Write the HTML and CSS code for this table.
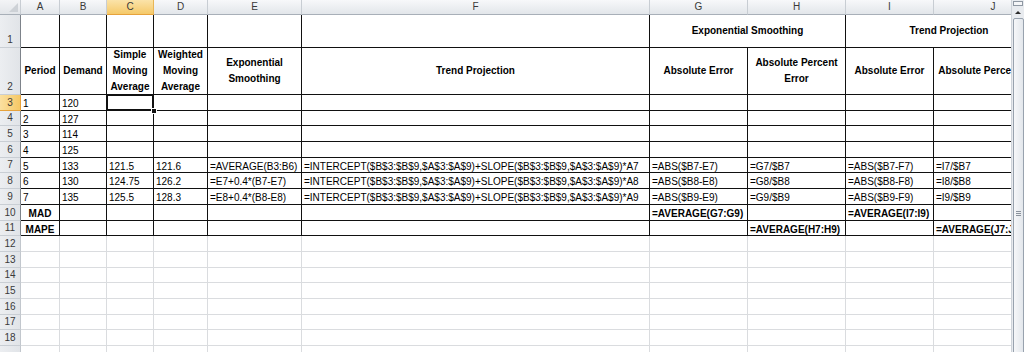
FILE: index.html
```html
<!DOCTYPE html>
<html>
<head>
<meta charset="utf-8">
<title>Forecast sheet</title>
<link rel="stylesheet" href="styles.css">
</head>
<body>
<div class="app">
  <div class="sheet">
    <div class="grid">
      <!-- column headers -->
      <div class="ch corner"><span class="tri"></span></div>
      <div class="ch">A</div><div class="ch">B</div><div class="ch sel">C</div><div class="ch">D</div><div class="ch">E</div><div class="ch">F</div><div class="ch">G</div><div class="ch">H</div><div class="ch">I</div><div class="ch">J</div>

      <!-- row 1 -->
      <div class="rh">1</div>
      <div class="c"></div><div class="c"></div><div class="c"></div><div class="c"></div><div class="c"></div><div class="c"></div>
      <div class="c hd span2">Exponential Smoothing</div>
      <div class="c hd span2">Trend Projection</div>

      <!-- row 2 -->
      <div class="rh">2</div>
      <div class="c hd">Period</div>
      <div class="c hd">Demand</div>
      <div class="c hd">Simple Moving Average</div>
      <div class="c hd">Weighted Moving Average</div>
      <div class="c hd">Exponential Smoothing</div>
      <div class="c hd">Trend Projection</div>
      <div class="c hd">Absolute Error</div>
      <div class="c hd">Absolute Percent Error</div>
      <div class="c hd">Absolute Error</div>
      <div class="c hd">Absolute Percent Error</div>

      <!-- row 3 -->
      <div class="rh sel">3</div>
      <div class="c">1</div><div class="c">120</div><div class="c active"></div><div class="c"></div><div class="c"></div><div class="c"></div><div class="c"></div><div class="c"></div><div class="c"></div><div class="c"></div>
      <!-- row 4 -->
      <div class="rh">4</div>
      <div class="c">2</div><div class="c">127</div><div class="c"></div><div class="c"></div><div class="c"></div><div class="c"></div><div class="c"></div><div class="c"></div><div class="c"></div><div class="c"></div>
      <!-- row 5 -->
      <div class="rh">5</div>
      <div class="c">3</div><div class="c">114</div><div class="c"></div><div class="c"></div><div class="c"></div><div class="c"></div><div class="c"></div><div class="c"></div><div class="c"></div><div class="c"></div>
      <!-- row 6 -->
      <div class="rh">6</div>
      <div class="c">4</div><div class="c">125</div><div class="c"></div><div class="c"></div><div class="c"></div><div class="c"></div><div class="c"></div><div class="c"></div><div class="c"></div><div class="c"></div>
      <!-- row 7 -->
      <div class="rh">7</div>
      <div class="c">5</div><div class="c">133</div><div class="c">121.5</div><div class="c">121.6</div>
      <div class="c">=AVERAGE(B3:B6)</div>
      <div class="c">=INTERCEPT($B$3:$B$9,$A$3:$A$9)+SLOPE($B$3:$B$9,$A$3:$A$9)*A7</div>
      <div class="c">=ABS($B7-E7)</div><div class="c">=G7/$B7</div><div class="c">=ABS($B7-F7)</div><div class="c">=I7/$B7</div>
      <!-- row 8 -->
      <div class="rh">8</div>
      <div class="c">6</div><div class="c">130</div><div class="c">124.75</div><div class="c">126.2</div>
      <div class="c">=E7+0.4*(B7-E7)</div>
      <div class="c">=INTERCEPT($B$3:$B$9,$A$3:$A$9)+SLOPE($B$3:$B$9,$A$3:$A$9)*A8</div>
      <div class="c">=ABS($B8-E8)</div><div class="c">=G8/$B8</div><div class="c">=ABS($B8-F8)</div><div class="c">=I8/$B8</div>
      <!-- row 9 -->
      <div class="rh">9</div>
      <div class="c">7</div><div class="c">135</div><div class="c">125.5</div><div class="c">128.3</div>
      <div class="c">=E8+0.4*(B8-E8)</div>
      <div class="c">=INTERCEPT($B$3:$B$9,$A$3:$A$9)+SLOPE($B$3:$B$9,$A$3:$A$9)*A9</div>
      <div class="c">=ABS($B9-E9)</div><div class="c">=G9/$B9</div><div class="c">=ABS($B9-F9)</div><div class="c">=I9/$B9</div>
      <!-- row 10 -->
      <div class="rh">10</div>
      <div class="c b ctr">MAD</div><div class="c"></div><div class="c"></div><div class="c"></div><div class="c"></div><div class="c"></div>
      <div class="c b">=AVERAGE(G7:G9)</div><div class="c"></div><div class="c b">=AVERAGE(I7:I9)</div><div class="c"></div>
      <!-- row 11 -->
      <div class="rh">11</div>
      <div class="c b ctr">MAPE</div><div class="c"></div><div class="c"></div><div class="c"></div><div class="c"></div><div class="c"></div>
      <div class="c"></div><div class="c b">=AVERAGE(H7:H9)</div><div class="c"></div><div class="c b">=AVERAGE(J7:J9)</div>

      <!-- rows 12-19 -->
      <div class="rh lt">12</div><div class="g"></div><div class="g"></div><div class="g"></div><div class="g"></div><div class="g"></div><div class="g"></div><div class="g"></div><div class="g"></div><div class="g"></div><div class="g"></div>
      <div class="rh lt">13</div><div class="g"></div><div class="g"></div><div class="g"></div><div class="g"></div><div class="g"></div><div class="g"></div><div class="g"></div><div class="g"></div><div class="g"></div><div class="g"></div>
      <div class="rh lt">14</div><div class="g"></div><div class="g"></div><div class="g"></div><div class="g"></div><div class="g"></div><div class="g"></div><div class="g"></div><div class="g"></div><div class="g"></div><div class="g"></div>
      <div class="rh lt">15</div><div class="g"></div><div class="g"></div><div class="g"></div><div class="g"></div><div class="g"></div><div class="g"></div><div class="g"></div><div class="g"></div><div class="g"></div><div class="g"></div>
      <div class="rh lt">16</div><div class="g"></div><div class="g"></div><div class="g"></div><div class="g"></div><div class="g"></div><div class="g"></div><div class="g"></div><div class="g"></div><div class="g"></div><div class="g"></div>
      <div class="rh lt">17</div><div class="g"></div><div class="g"></div><div class="g"></div><div class="g"></div><div class="g"></div><div class="g"></div><div class="g"></div><div class="g"></div><div class="g"></div><div class="g"></div>
      <div class="rh lt">18</div><div class="g"></div><div class="g"></div><div class="g"></div><div class="g"></div><div class="g"></div><div class="g"></div><div class="g"></div><div class="g"></div><div class="g"></div><div class="g"></div>
      <div class="rh lt"></div><div class="g"></div><div class="g"></div><div class="g"></div><div class="g"></div><div class="g"></div><div class="g"></div><div class="g"></div><div class="g"></div><div class="g"></div><div class="g"></div>
    </div>
  </div>
  <div class="vscroll">
    <div class="split"></div>
    <div class="up"><span class="arrow"></span></div>
    <div class="thumb"><span class="grip"></span></div>
  </div>
</div>
</body>
</html>
```

FILE: styles.css
```css
html, body {
  margin: 0;
  padding: 0;
  background: #ffffff;
}

body {
  font-family: "Liberation Sans", Arial, sans-serif;
  font-size: 10px;
  color: #000;
}

.app {
  display: flex;
  width: 1024px;
  height: 352px;
  overflow: hidden;
}

.sheet {
  width: 1011px;
  flex-shrink: 0;
  overflow: hidden;
}

.grid {
  display: grid;
  grid-template-columns: 21px 39px 47px 47px 54px 94px 348px 98px 98px 88px 119px;
  grid-template-rows: 15px 33px 47px repeat(17, 15.69px);
  width: max-content;
}

.grid > div {
  box-sizing: border-box;
  min-width: 0;
}

/* column headers */
.ch {
  background: linear-gradient(#f7f8fa, #e2e6ea);
  border-right: 1px solid #c8cdd3;
  border-bottom: 1px solid #a8afb8;
  color: #3a3a3a;
  text-align: center;
  line-height: 14px;
}

.ch.sel {
  background: linear-gradient(#fbe3a9, #f5c969);
  border-bottom-color: #e6a23c;
  border-right-color: #e8b656;
}

.corner {
  position: relative;
  background: linear-gradient(#f3f4f6, #e2e5e9);
}

.corner .tri {
  position: absolute;
  right: 2px;
  bottom: 2px;
  width: 0;
  height: 0;
  border-left: 9px solid transparent;
  border-bottom: 9px solid #cdd1d6;
}

/* row headers */
.rh {
  background: linear-gradient(90deg, #eceef1, #e1e4e8);
  border-right: 1px solid #7d838a;
  border-bottom: 1px solid #c9ced4;
  color: #3a3a3a;
  display: flex;
  align-items: flex-end;
  justify-content: center;
  line-height: 13px;
  padding-bottom: 1px;
}

.rh.lt {
  border-right-color: #c2c7cd;
}

.rh.sel {
  background: linear-gradient(90deg, #fbe0a0, #f5c866);
  border-bottom-color: #e6a23c;
  border-right-color: #e6a23c;
}

/* bordered cells */
.c {
  border-right: 1px solid #111;
  border-bottom: 1px solid #111;
  padding: 2px 2px 0;
  line-height: 13px;
  white-space: nowrap;
  overflow: hidden;
}

.c.b {
  font-weight: bold;
}

.c.ctr {
  text-align: center;
}

.c.hd {
  font-weight: bold;
  white-space: normal;
  display: flex;
  align-items: center;
  justify-content: center;
  text-align: center;
  line-height: 15.7px;
  padding: 0 1px;
}

.span2 {
  grid-column: span 2;
}

.c.active {
  position: relative;
  overflow: visible;
}

.c.active::before {
  content: "";
  position: absolute;
  left: -1px;
  top: -1px;
  right: -1px;
  bottom: -1px;
  border: 2px solid #111;
}

.c.active::after {
  content: "";
  position: absolute;
  right: -4px;
  bottom: -4px;
  width: 4px;
  height: 4px;
  background: #111;
  border: 1px solid #fff;
  z-index: 2;
}

/* gridlines */
.g {
  border-right: 1px solid #dadcdf;
  border-bottom: 1px solid #dadcdf;
}

/* vertical scrollbar */
.vscroll {
  width: 13px;
  box-sizing: border-box;
  background: #e8ebef;
  border-left: 1px solid #cfd4da;
  display: flex;
  flex-direction: column;
  align-items: center;
  overflow: hidden;
}

.split {
  width: 10px;
  height: 5px;
  margin-top: 1px;
  box-sizing: border-box;
  border: 1px solid #8f98a3;
  background: #f5f6f8;
  flex-shrink: 0;
}

.up {
  height: 12px;
  width: 100%;
  display: flex;
  align-items: center;
  justify-content: center;
  flex-shrink: 0;
}

.arrow {
  width: 0;
  height: 0;
  border-left: 3px solid transparent;
  border-right: 3px solid transparent;
  border-bottom: 3px solid #2b2b2b;
}

.thumb {
  width: 11px;
  height: 391px;
  flex-shrink: 0;
  box-sizing: border-box;
  border: 1px solid #98a2ae;
  border-radius: 2px;
  background: linear-gradient(90deg, #f6f7f9, #e3e7ec);
  display: flex;
  align-items: center;
  justify-content: center;
}

.grip {
  width: 5px;
  height: 5px;
  border-top: 1px solid #8a929c;
  border-bottom: 1px solid #8a929c;
  position: relative;
  box-sizing: border-box;
}

.grip::after {
  content: "";
  position: absolute;
  left: 0;
  right: 0;
  top: 1px;
  border-top: 1px solid #8a929c;
}
```
